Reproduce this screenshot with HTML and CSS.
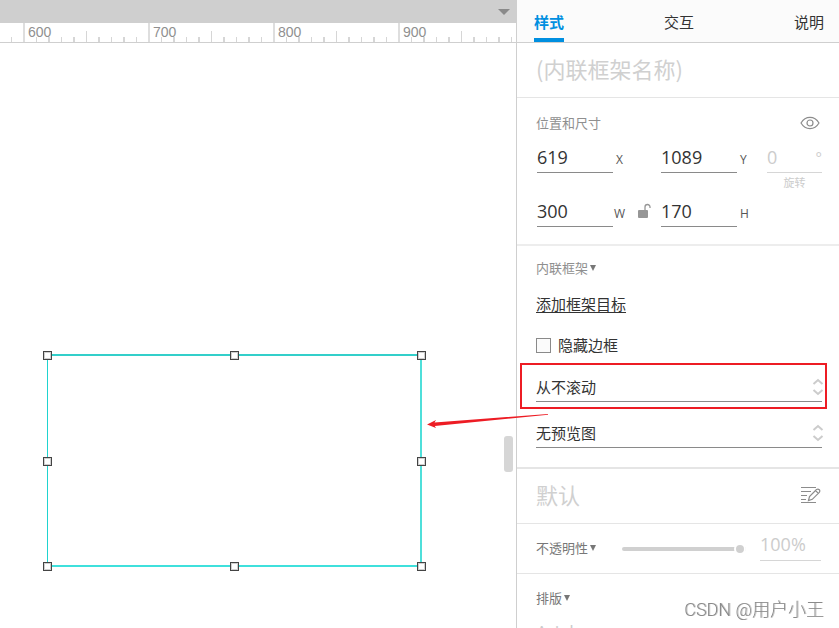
FILE: index.html
```html
<!DOCTYPE html>
<html lang="zh-CN">
<head>
<meta charset="utf-8">
<title>内联框架</title>
<link rel="stylesheet" href="styles.css">
</head>
<body>
<div class="app">
  <main class="workspace">
    <div class="tabstrip"><button class="tab-menu" type="button" aria-label="页面列表"></button></div>
    <div class="ruler">
      <svg class="ticks" width="1200" height="19" aria-hidden="true">
        <defs>
          <pattern id="scale" x="23" width="125" height="19" patternUnits="userSpaceOnUse">
            <path d="M0 0h2v19h-2z" fill="#dedede"/>
            <path d="M13 14h1v5h-1zM25 14h2v5h-2zM38 14h1v5h-1zM50 14h2v5h-2zM63 8h1v11h-1zM75 14h2v5h-2zM88 14h1v5h-1zM100 14h2v5h-2zM113 14h1v5h-1z" fill="#d6d6d6"/>
          </pattern>
        </defs>
        <rect width="1200" height="19" fill="url(#scale)"/>
      </svg>
      <div class="marks"><span>600</span><span>700</span><span>800</span><span>900</span></div>
    </div>
    <div class="canvas">
      <div class="frame">
        <i class="handle nw"></i><i class="handle n"></i><i class="handle ne"></i>
        <i class="handle w"></i><i class="handle e"></i>
        <i class="handle sw"></i><i class="handle s"></i><i class="handle se"></i>
      </div>
      <div class="scroll-thumb"></div>
    </div>
  </main>

  <aside class="panel">
    <nav class="tabs">
      <button class="tab active" type="button">样式</button>
      <button class="tab" type="button">交互</button>
      <button class="tab" type="button">说明</button>
    </nav>

    <section class="name-row">
      <input class="name" type="text" placeholder="(内联框架名称)" aria-label="内联框架名称">
    </section>

    <section class="position">
      <div class="heading">
        <h2>位置和尺寸</h2>
        <button class="icon-button" type="button" aria-label="可见性">
          <svg width="20" height="14" viewBox="0 0 20 14" fill="none" stroke="#8c8c8c" stroke-width="1.200"><path d="M1 7C5.500-.5 14.500-.5 19 7 14.500 14.500 5.500 14.500 1 7z"/><circle cx="10" cy="7" r="3"/></svg>
        </button>
      </div>
      <div class="fields">
        <input id="x" type="text" value="619"><label for="x">X</label>
        <input id="y" type="text" value="1089"><label for="y">Y</label>
        <div class="rotation">
          <input id="r" type="text" value="0" disabled><span class="degree">°</span>
          <label for="r">旋转</label>
        </div>
        <input id="w" type="text" value="300">
        <div class="w-cell"><label for="w">W</label>
          <button class="icon-button" type="button" aria-label="锁定比例">
            <svg width="14" height="16" viewBox="0 0 14 16"><rect x="1" y="7" width="10" height="8" rx="1" fill="#969696"/><path d="M8 7V4a2.500 2.500 0 0 1 5 0v1" fill="none" stroke="#969696" stroke-width="1.300"/></svg>
          </button>
        </div>
        <input id="h" type="text" value="170"><label for="h">H</label>
      </div>
    </section>

    <section class="iframe-options">
      <h2 class="collapsible">内联框架</h2>
      <a class="target" href="#target">添加框架目标</a>
      <label class="check"><input type="checkbox">隐藏边框</label>
      <div class="select marked">
        <select aria-label="滚动"><option>从不滚动</option></select>
        <svg class="stepper" width="12" height="18" viewBox="0 0 12 18"><path d="M1.500 6 6 2l4.500 4M1.500 12 6 16l4.500-4"/></svg>
        <svg class="arrow" width="124" height="16" viewBox="0 0 124 16" aria-hidden="true"><path d="M1 11.500 10 7 8.500 9.500 122 1 122 1.800 8.800 13 10 15z" fill="#ed1c24"/></svg>
      </div>
      <div class="select">
        <select aria-label="预览图"><option>无预览图</option></select>
        <svg class="stepper" width="12" height="18" viewBox="0 0 12 18"><path d="M1.500 6 6 2l4.500 4M1.500 12 6 16l4.500-4"/></svg>
      </div>
    </section>

    <section class="style-row">
      <span class="style-name">默认</span>
      <button class="icon-button" type="button" aria-label="管理样式">
        <svg width="20" height="18" viewBox="0 0 20 18" fill="none" stroke="#8c8c8c" stroke-width="1.200"><path d="M0 1.500h15M0 5.500h10M0 9.500h6M0 13.500h5M0 16.500h15"/><path d="M7.500 14.500 8.500 10.500 15.500 3.500Q17 2.500 18.300 3.700 19.300 5 18.300 6.300L11.300 13.300zM14.500 4.500l2.800 2.800"/></svg>
      </button>
    </section>

    <section class="opacity-row">
      <h2 class="collapsible dark">不透明性</h2>
      <input class="slider" type="range" min="0" max="100" value="100" aria-label="不透明性">
      <input class="percent" type="text" value="100%" disabled aria-label="不透明性百分比">
    </section>

    <section class="type-row">
      <h2 class="collapsible dark">排版</h2>
      <input class="font-name" type="text" value="Arial" disabled aria-label="字体">
    </section>
  </aside>
</div>
<div class="watermark">CSDN @用户小王</div>
</body>
</html>
```

FILE: styles.css
```css
* { box-sizing: border-box; }

body {
  margin: 0;
  background: #fff;
  color: #333;
  font-family: "Open Sans", "Noto Sans CJK SC", sans-serif;
  font-size: 15px;
  line-height: 20px;
}

button, input, select {
  margin: 0;
  padding: 0;
  border: 0;
  background: none;
  color: inherit;
  font: inherit;
}

h2 {
  margin: 0;
  color: #8f8f8f;
  font-size: 13px;
  font-weight: 400;
  line-height: 20px;
}

svg { display: block; }

.app {
  display: flex;
  height: 100vh;
  overflow: hidden;
}

/* Workspace */
.workspace {
  display: flex;
  flex: 1;
  flex-direction: column;
  min-width: 0;
}

.tabstrip {
  display: flex;
  flex: none;
  align-items: center;
  justify-content: flex-end;
  height: 23px;
  padding-right: 6px;
  background: #cfcfcf;
}

.tab-menu {
  border: solid transparent;
  border-width: 6px 6px 0;
  border-top-color: #8a8a8a;
}

.ruler {
  position: relative;
  flex: none;
  height: 20px;
  overflow: hidden;
  border-bottom: 1px solid #cfcfcf;
}

.ticks {
  position: absolute;
  top: 0;
  left: 0;
}

.marks {
  display: flex;
  position: relative;
  padding-left: 28px;
  color: #8f8f8f;
  font-family: "Liberation Sans", sans-serif;
  font-size: 14px;
  line-height: 18px;
}

.marks span { flex: 0 0 125px; }

.canvas {
  position: relative;
  flex: 1;
  overflow: hidden;
}

.frame {
  position: absolute;
  top: 311px;
  left: 47px;
  width: 375px;
  height: 213px;
  border-top: 2px solid #32cfca;
  border-right: 2px solid #4fdfda;
  border-bottom: 2px solid #3fe0dc;
  border-left: 1px solid #1fd3cf;
}

.handle {
  position: absolute;
  width: 9px;
  height: 9px;
  margin: -4px;
  border: 1px solid #444;
  box-shadow: inset 0 0 0 1px #d0d0d0;
  background: #fff;
}

.nw, .n, .ne { top: -1px; }
.w, .e { top: 50%; }
.sw, .s, .se { top: 210px; }
.nw, .w, .sw { left: -1px; }
.n, .s { left: 50%; }
.ne, .e, .se { left: 373px; }

.scroll-thumb {
  position: absolute;
  top: 393px;
  right: 3px;
  width: 9px;
  height: 36px;
  border-radius: 3px;
  background: #d6d6d6;
}

/* Inspector */
.panel {
  flex: 0 0 323px;
  border-left: 1px solid #cfcfcf;
}

.panel section { padding: 0 17px 0 19px; }

.tabs {
  display: flex;
  justify-content: space-between;
  height: 43px;
  padding: 4px 15px 0 17px;
  border-bottom: 1px solid #cfcfcf;
  background: #fbfbfb;
}

.tab {
  height: 38px;
  padding-top: 2px;
  border-bottom: 4px solid transparent;
}

.tab.active {
  border-color: #008fe0;
  color: #008fe0;
  font-weight: 700;
}

.name-row,
.style-row {
  display: flex;
  align-items: center;
  height: 55px;
  border-bottom: 1px solid #e5e5e5;
}

.name,
.style-name {
  flex: 1;
  min-width: 0;
  padding-bottom: 4px;
  color: #d0d0d0;
  font-family: "Noto Sans CJK SC", sans-serif;
  font-size: 22px;
  font-weight: 400;
  line-height: 32px;
}

.name::placeholder { color: #d0d0d0; opacity: 1; }

.heading {
  display: flex;
  align-items: center;
  justify-content: space-between;
  margin-bottom: 10px;
  padding-right: 2px;
}

.panel .position {
  padding: 15px 17px 17px 19px;
  border-bottom: 2px solid #ededed;
}

.fields {
  display: grid;
  grid-template-columns: 76fr 48px 76fr 30px 55fr;
  row-gap: 24px;
  padding-left: 1px;
}

.fields input,
.percent,
.font-name {
  width: 100%;
  height: 30px;
  padding-bottom: 2px;
  border-bottom: 1px solid #8a8a8a;
  font-size: 18px;
}

.fields label {
  padding: 7px 0 0 3px;
  color: #555;
  font-size: 12px;
}

.rotation {
  position: relative;
  height: 30px;
  color: #ccc;
  text-align: center;
}

.rotation input,
.percent,
.font-name {
  border-color: #d6d6d6;
  color: #ccc;
}

.rotation label {
  display: block;
  padding: 0;
  color: #ccc;
  font-size: 11px;
}

.degree {
  position: absolute;
  top: 4px;
  right: 0;
}

.w-cell {
  display: flex;
  align-items: flex-start;
  justify-content: space-between;
  padding-right: 10px;
}

.w-cell .icon-button { padding-top: 6px; }

.w-cell label { padding-left: 1px; }

.panel .iframe-options {
  display: flex;
  flex-direction: column;
  align-items: flex-start;
  padding-top: 12px;
  padding-bottom: 19px;
  border-bottom: 2px solid #e5e5e5;
}

.collapsible {
  display: flex;
  align-items: center;
  gap: 2px;
}

.dark { color: #777; }

.collapsible::after {
  border: solid transparent;
  border-width: 6px 3px 0;
  border-top-color: #777;
  content: "";
}

.target {
  margin-top: 16px;
  color: #333;
  text-underline-offset: 2px;
}

.check {
  display: flex;
  align-items: center;
  gap: 7px;
  margin-top: 21px;
}

.check input {
  width: 15px;
  height: 15px;
  appearance: none;
  border: 1px solid #8a8a8a;
  background: #fbfbfb;
}

.select {
  position: relative;
  width: 100%;
  margin-top: 16px;
}

.check + .select { margin-top: 17px; }

.select select {
  display: block;
  width: 100%;
  height: 30px;
  appearance: none;
  border-bottom: 1px solid #8a8a8a;
}

.stepper {
  position: absolute;
  top: 6px;
  right: -2px;
  fill: none;
  stroke: #ccc;
  stroke-width: 2;
}

/* Callout around the scrolling option */
.marked::after {
  position: absolute;
  inset: -9px -5px -7px -16px;
  border: 2px solid #ed1c24;
  content: "";
  pointer-events: none;
}

.arrow {
  position: absolute;
  top: 41px;
  left: -110px;
}

.panel .style-row { padding-right: 18px; }

.style-row .icon-button { padding-bottom: 2px; }

.opacity-row {
  display: flex;
  align-items: center;
  height: 50px;
  border-bottom: 1px solid #e5e5e5;
}

.panel .opacity-row { padding-right: 18px; }

.opacity-row h2 { padding-bottom: 2px; }

.slider {
  flex: 1;
  min-width: 0;
  height: 12px;
  margin: 0 14px 0 26px;
  appearance: none;
}

.slider::-webkit-slider-runnable-track {
  height: 4px;
  border-radius: 2px;
  background: #d0d0d0;
}

.slider::-webkit-slider-thumb {
  width: 12px;
  height: 12px;
  margin-top: -4px;
  appearance: none;
  border: 2px solid #fff;
  border-radius: 50%;
  background: #d0d0d0;
}

.percent {
  flex: 0 0 61px;
  width: 61px;
  margin-bottom: 6px;
}

.panel .type-row { padding-top: 14px; }

.font-name { margin-top: 10px; }

.watermark {
  position: fixed;
  right: 15px;
  bottom: 6px;
  color: #8a8a8a;
  font-family: Roboto, "Noto Sans CJK SC", sans-serif;
  font-size: 18px;
  font-weight: 300;
  line-height: 24px;
  text-shadow: 1px 0 0 #ccc;
}
```
